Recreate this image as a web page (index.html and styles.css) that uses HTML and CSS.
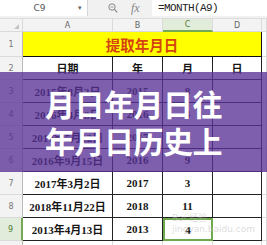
FILE: index.html
```html
<!DOCTYPE html>
<html lang="zh-CN">
<head>
  <meta charset="UTF-8" />
  <title>提取年月日</title>
  <link rel="stylesheet" href="styles.css">
</head>
<body>
  <div class="app">
    <!-- formula bar -->
    <div class="formula-bar">
      <div class="name-box">
        <span class="cell-ref">C9</span>
        <span class="drop">&#9662;</span>
      </div>
      <div class="tools">
        <svg class="zoom-icon" width="10" height="10" viewBox="0 0 10 10">
          <circle cx="4" cy="4" r="3.2" fill="none" stroke="#888" stroke-width="1"/>
          <line x1="6.4" y1="6.4" x2="9.3" y2="9.3" stroke="#888" stroke-width="1.2"/>
          <line x1="2.5" y1="4" x2="5.5" y2="4" stroke="#888" stroke-width="0.8"/>
        </svg>
        <span class="fx">fx</span>
      </div>
      <div class="formula">=MONTH(A9)</div>
    </div>

    <!-- sheet -->
    <div class="sheet">
      <div class="corner"><span class="tri"></span></div>
      <div class="col-head">A</div>
      <div class="col-head">B</div>
      <div class="col-head active">C</div>
      <div class="col-head">D</div>
      <div class="col-head"></div>

      <div class="row-head">1</div>
      <div class="title">提取年月日</div>
      <div class="cell"></div>

      <div class="row-head">2</div>
      <div class="cell box first">日期</div>
      <div class="cell box">年</div>
      <div class="cell box">月</div>
      <div class="cell box">日</div>
      <div class="cell"></div>

      <div class="row-head">3</div>
      <div class="cell box first">2015年8月3日</div>
      <div class="cell box">2015</div>
      <div class="cell box">8</div>
      <div class="cell box"></div>
      <div class="cell"></div>

      <div class="row-head">4</div>
      <div class="cell box first">2016年4月8日</div>
      <div class="cell box">2016</div>
      <div class="cell box">4</div>
      <div class="cell box"></div>
      <div class="cell"></div>

      <div class="row-head">5</div>
      <div class="cell box first">2017年5月12日</div>
      <div class="cell box">2017</div>
      <div class="cell box">5</div>
      <div class="cell box"></div>
      <div class="cell"></div>

      <div class="row-head">6</div>
      <div class="cell box first">2016年9月15日</div>
      <div class="cell box">2016</div>
      <div class="cell box">9</div>
      <div class="cell box"></div>
      <div class="cell"></div>

      <div class="row-head">7</div>
      <div class="cell box first">2017年3月2日</div>
      <div class="cell box">2017</div>
      <div class="cell box">3</div>
      <div class="cell box"></div>
      <div class="cell"></div>

      <div class="row-head">8</div>
      <div class="cell box first">2018年11月22日</div>
      <div class="cell box">2018</div>
      <div class="cell box">11</div>
      <div class="cell box"></div>
      <div class="cell"></div>

      <div class="row-head active">9</div>
      <div class="cell box first">2013年4月13日</div>
      <div class="cell box">2013</div>
      <div class="cell box selected">4</div>
      <div class="cell box"></div>
      <div class="cell"></div>

      <div class="row-head">10</div>
      <div class="cell"></div>
      <div class="cell"></div>
      <div class="cell"></div>
      <div class="cell"></div>
      <div class="cell"></div>
    </div>

    <!-- watermark -->
    <div class="watermark">Bai 经验<br>jingyan.baidu.com</div>

    <!-- banner over the sheet -->
    <div class="banner">
      <div class="banner-text">月日年月日往<br>年月日历史上</div>
    </div>
  </div>
</body>
</html>
```

FILE: styles.css
```css
body {
  margin: 0;
  width: 267px;
  height: 245px;
  overflow: hidden;
  background-color: #fff;
  font-family: "Liberation Serif", "Noto Sans CJK SC", serif;
}

.app {
  position: relative;
  width: 267px;
  height: 245px;
  overflow: hidden;
}

/* formula bar */
.formula-bar {
  display: flex;
  height: 19px;
  background-color: #f1f1f1;
  box-sizing: border-box;
  border-bottom: 1px solid #dcdcdc;
}

.name-box {
  width: 88px;
  height: 16px;
  background-color: #fff;
  border-right: 1px solid #d6d6d6;
  display: flex;
  align-items: center;
  box-sizing: border-box;
}

.cell-ref {
  flex: 1;
  text-align: center;
  font-family: "DejaVu Sans", sans-serif;
  font-size: 9px;
  color: #555;
  padding-left: 6px;
}

.drop {
  font-size: 7px;
  color: #666;
  width: 14px;
  text-align: center;
}

.tools {
  width: 64px;
  height: 16px;
  display: flex;
  align-items: center;
  padding-left: 20px;
  box-sizing: border-box;
  gap: 13px;
}

.fx {
  font-family: "Liberation Serif", serif;
  font-style: italic;
  font-size: 12px;
  color: #888;
}

.formula {
  flex: 1;
  height: 16px;
  background-color: #fff;
  padding-left: 6px;
  font-family: "Liberation Mono", monospace;
  font-size: 11px;
  line-height: 16px;
  color: #222;
  letter-spacing: -0.6px;
}

/* sheet grid */
.sheet {
  display: grid;
  grid-template-columns: 23px 90px 50px 50px 49px 1fr;
  grid-template-rows: 13px 25px repeat(9, 23px);
}

.sheet > div {
  box-sizing: border-box;
  border-right: 1px solid #dadada;
  border-bottom: 1px solid #dadada;
  display: flex;
  align-items: center;
  justify-content: center;
}

.corner {
  background-color: #f3f3f3;
  justify-content: flex-end !important;
  align-items: flex-end !important;
}

.tri {
  width: 0;
  height: 0;
  margin: 0 3px 2px 0;
  border-left: 5px solid transparent;
  border-bottom: 5px solid #c4c4c4;
}

.col-head {
  background-color: #f3f3f3;
  font-family: "DejaVu Sans", sans-serif;
  font-size: 8px;
  color: #666;
}

.col-head.active {
  background-color: #e2ecdb;
  border-bottom: 2px solid #74a854 !important;
  color: #4e7d33;
}

.row-head {
  background-color: #f3f3f3;
  font-family: "DejaVu Sans", sans-serif;
  font-size: 8px;
  color: #777;
  border-right: 1px solid #b9b9b9 !important;
}

.row-head.active {
  background-color: #e2ecdb;
  color: #4e7d33;
  border-right: 2px solid #74a854 !important;
}

.title {
  grid-column: 2 / 6;
  background-color: #ffff00;
  color: #d5430f;
  font-family: "Noto Sans CJK SC", sans-serif;
  font-weight: bold;
  font-size: 14.5px;
  border-bottom: 1px solid #111 !important;
  border-right: 1px solid #111 !important;
}

.cell {
  font-size: 11px;
  font-weight: bold;
  color: #151515;
}

.cell.box {
  border-right: 1px solid #222;
  border-bottom: 1px solid #222;
}

.cell.first {
  font-size: 11px;
}

.cell.selected {
  border: 2px solid #6fa94d;
}

.watermark {
  position: absolute;
  left: 172px;
  top: 213px;
  font-family: "DejaVu Sans", "Noto Sans CJK SC", sans-serif;
  font-size: 9px;
  line-height: 11px;
  color: rgba(190, 190, 190, 0.55);
}

/* purple banner */
.banner {
  position: absolute;
  left: 0;
  top: 72px;
  width: 267px;
  height: 100px;
  background-color: rgba(88, 50, 150, 0.78);
  display: flex;
  align-items: center;
  justify-content: center;
}

.banner-text {
  color: #fff;
  font-family: "Noto Sans CJK SC", sans-serif;
  font-weight: bold;
  font-size: 30px;
  line-height: 37px;
  letter-spacing: -0.5px;
  text-align: center;
}
```
